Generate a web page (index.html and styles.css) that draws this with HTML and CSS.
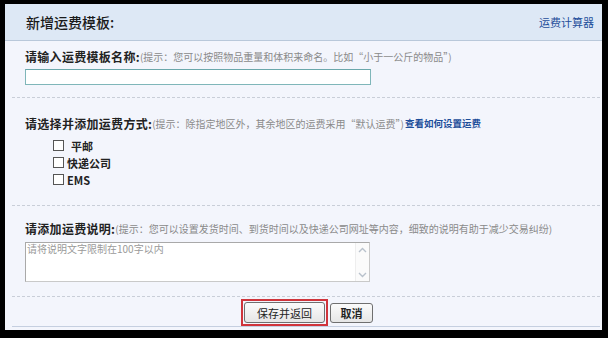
FILE: index.html
```html
<!DOCTYPE html>
<html lang="zh-CN">
<head>
<meta charset="utf-8">
<title>新增运费模板</title>
<link rel="stylesheet" href="styles.css">
</head>
<body>
<div class="panel">
  <div class="header">
    <span class="title">新增运费模板:</span>
    <a class="calc" href="#">运费计算器</a>
  </div>
  <div class="content">
    <div class="section s1">
      <div class="line"><span class="label">请输入运费模板名称:</span><span class="hint">(提示：您可以按照物品重量和体积来命名。比如“小于一公斤的物品”)</span></div>
      <div class="input"></div>
    </div>
    <div class="section s2">
      <div class="line"><span class="label">请选择并添加运费方式:</span><span class="hint">(提示：除指定地区外，其余地区的运费采用“默认运费”)</span><a class="howto" href="#">查看如何设置运费</a></div>
      <ul class="options">
        <li><span class="box"></span><span class="opt pad">平邮</span></li>
        <li><span class="box"></span><span class="opt">快递公司</span></li>
        <li><span class="box"></span><span class="opt">EMS</span></li>
      </ul>
    </div>
    <div class="section s3">
      <div class="line"><span class="label">请添加运费说明:</span><span class="hint">(提示：您可以设置发货时间、到货时间以及快递公司网址等内容，细致的说明有助于减少交易纠纷)</span></div>
      <div class="textarea">
        <div class="ta-text">请将说明文字限制在100字以内</div>
        <div class="ta-scroll">
          <svg width="9" height="6" viewBox="0 0 9 6"><path d="M1 5 L4.5 1.5 L8 5" fill="none" stroke="#b9c2cc" stroke-width="1.4"/></svg>
          <svg width="9" height="6" viewBox="0 0 9 6"><path d="M1 1 L4.5 4.5 L8 1" fill="none" stroke="#b9c2cc" stroke-width="1.4"/></svg>
        </div>
      </div>
    </div>
    <div class="actions">
      <span class="focus"><button class="btn save" type="button">保存并返回</button></span>
      <button class="btn cancel" type="button">取消</button>
    </div>
  </div>
</div>
</body>
</html>
```
FILE: styles.css
```css
html, body {
  margin: 0;
  padding: 0;
  background: #000;
}
body {
  width: 608px;
  height: 338px;
  overflow: hidden;
  font-family: "Noto Sans CJK SC", "DejaVu Sans", sans-serif;
}
.panel {
  width: 597px;
  height: 326px;
  margin: 4px 0 0 5px;
  background: #f3f5fc;
  display: flex;
  flex-direction: column;
}
.header {
  height: 36px;
  border-bottom: 1px solid #b9c8da;
  background: #dde8f5;
  display: flex;
  justify-content: space-between;
  align-items: center;
  padding: 0 8px 0 21px;
}
.title {
  font-size: 14px;
  font-weight: 500;
  color: #1a1a1a;
  line-height: 16px;
}
.calc {
  font-size: 11px;
  color: #1d4e9a;
  text-decoration: none;
  line-height: 14px;
}
.content {
  margin: 0 2px 0 7px;
  display: flex;
  flex-direction: column;
}
.section {
  border-bottom: 1px dashed #c9ced8;
  padding-left: 13px;
}
.s1 { padding-top: 7px; padding-bottom: 12px; }
.s2 { padding-top: 17px; padding-bottom: 17px; }
.s3 { padding-top: 14px; padding-bottom: 14px; }
.line {
  display: flex;
  align-items: center;
  height: 16px;
  white-space: nowrap;
}
.label {
  font-size: 12px;
  font-weight: bold;
  color: #222;
  letter-spacing: 0.3px;
}
.hint {
  font-size: 10px;
  color: #8a8a8a;
}
.howto {
  font-size: 9.5px;
  font-weight: bold;
  color: #1d4e9a;
  text-decoration: none;
  margin-left: 1px;
}
.input {
  margin-top: 5px;
  width: 344px;
  height: 14px;
  border: 1px solid #7fb6b9;
  border-top-color: #6aa7ab;
  background: #fff;
}
.options {
  list-style: none;
  margin: 6px 0 0 28px;
  padding: 0;
}
.options li {
  height: 17px;
  display: flex;
  align-items: center;
}
.box {
  width: 9px;
  height: 9px;
  border: 1px solid #555;
  background: #fff;
  margin-right: 3px;
}
.opt {
  font-size: 11px;
  font-weight: bold;
  color: #222;
}
.opt.pad { margin-left: 4px; }
.textarea {
  margin-top: 6px;
  width: 343px;
  height: 38px;
  border: 1px solid #a9a9a9;
  border-right-color: #c9c9c9;
  border-bottom-color: #c9c9c9;
  background: #fff;
  display: flex;
}
.ta-text {
  flex: 1;
  font-size: 10px;
  color: #9a9a9a;
  line-height: 12px;
  padding-left: 1px;
}
.ta-scroll {
  width: 13px;
  display: flex;
  flex-direction: column;
  justify-content: space-between;
  align-items: center;
  padding: 4px 0 3px;
  background: #fbfbfb;
  border-left: 1px solid #eee;
}
.actions {
  padding: 2px 0 0 229px;
  height: 27px;
  border-bottom: 1px solid #c5cfe0;
  display: flex;
  align-items: center;
}
.focus {
  display: inline-flex;
  border: 2px solid #d0343b;
  padding: 1px;
  box-sizing: border-box;
  height: 27px;
  align-items: center;
}
.btn {
  font-family: "Noto Sans CJK SC", sans-serif;
  font-size: 11px;
  color: #222;
  background: linear-gradient(#fbfbfb, #e6e6e6);
  border: 1px solid #6f6f6f;
  border-radius: 3px;
  padding: 0;
  line-height: 18px;
}
.save {
  width: 81px;
  height: 21px;
}
.cancel {
  width: 43px;
  height: 20px;
  margin-left: 2px;
  font-weight: bold;
}
```
